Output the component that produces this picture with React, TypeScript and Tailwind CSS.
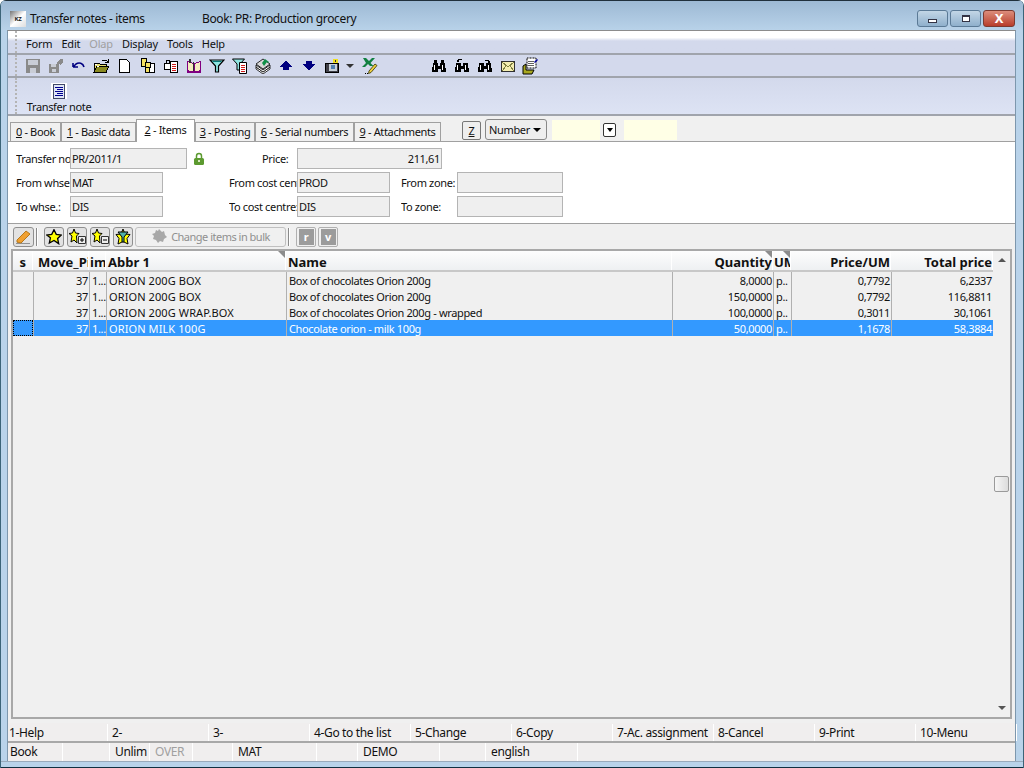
import type { ReactNode } from 'react'

const font = "font-['Noto_Sans','Liberation_Sans',sans-serif]"

function Ico({ children, w = 16, h = 16 }: { children: ReactNode; w?: number; h?: number }) {
  return (
    <svg width={w} height={h} viewBox={`0 0 ${w} ${h}`} shapeRendering="crispEdges">
      {children}
    </svg>
  )
}

const Floppy = ({ arrow }: { arrow?: boolean }) => (
  <Ico>
    {arrow ? (
      <>
        <path d="M1 6h10v9H1z" fill="#8a8a8a" />
        <path d="M3 6h5v3H3zM4 11h4v3H4z" fill="#c9cdd6" />
        <path d="M9 4l3-3h3v3l-3 3-1-1-1 1z" fill="#8a8a8a" />
      </>
    ) : (
      <>
        <path d="M1 1h14v14H1z" fill="#8a8a8a" />
        <path d="M3 2h10v5H3zM5 10h6v5H5z" fill="#c9cdd6" />
      </>
    )}
  </Ico>
)

const Undo = () => (
  <svg width="16" height="16" viewBox="0 0 16 16">
    <path d="M2 9h5M2 9V5M2 9l3-3c3-2 7-1 8 3" fill="none" stroke="#000080" strokeWidth="1.6" />
  </svg>
)

const Folder = () => (
  <Ico w={17}>
    <path d="M1 5h5l1 1h6v8H1z" fill="#e8e070" stroke="#000" />
    <path d="M1 14l3-6h12l-3 6z" fill="#8a8a20" stroke="#000" />
    <path d="M9 2h4l2 2M15 1v3h-3" fill="none" stroke="#000" />
    <path d="M2 6h2v1H2zM4 8h2v1H4z" fill="#fff" />
  </Ico>
)

const Doc = () => (
  <Ico>
    <path d="M2.500 1.500h7l3 3v10h-10z" fill="#fff" stroke="#000" />
  </Ico>
)

const CopyDocs = () => (
  <Ico>
    <path d="M1.500 .5h5v8h-5z" fill="#f4e060" stroke="#000" />
    <path d="M9.500 5.500h5v9h-5z" fill="#fff" stroke="#000" />
    <path d="M5.500 4.500h5v5h-5z" fill="#f4e060" stroke="#000" />
    <path d="M5.500 9.500h4v5h-4z" fill="#f4e060" stroke="#000" />
  </Ico>
)

const LockDoc = () => (
  <Ico>
    <path d="M7.500 3.500h7v11h-7z" fill="#fff" stroke="#000" />
    <path d="M9 6h4v1H9zM9 8h4v1H9zM9 10h4v1H9zM9 12h4v1H9z" fill="#d01818" />
    <path d="M1.500 5.500h6v6h-6z" fill="#fff" stroke="#000" />
    <path d="M3 5V2h3v3" fill="none" stroke="#000" />
  </Ico>
)

const Book = () => (
  <Ico>
    <path d="M1.500 3.500l6 2v9l-6-2z" fill="#f4ecc0" stroke="#800080" />
    <path d="M14.500 3.500l-6 2v9l6-2z" fill="#f4ecc0" stroke="#800080" />
    <path d="M1 13h14v2H1z" fill="#800080" />
    <path d="M3 1h2v4H3zM7 4h1v9H7z" fill="#303030" />
  </Ico>
)

const Funnel = () => (
  <svg width="16" height="16" viewBox="0 0 16 16">
    <path d="M1 2h14l-5.500 6v6h-3V8z" fill="#8fe4e0" stroke="#000" strokeWidth="1.2" />
    <path d="M3 3h10l-1 1H4z" fill="#087878" />
  </svg>
)

const FunnelDoc = () => (
  <svg width="16" height="16" viewBox="0 0 16 16">
    <path d="M.5 1h12L8 6v6H5V6z" fill="#8fe4e0" stroke="#000" />
    <path d="M7.500 4.500h7v11h-7z" fill="#fff" stroke="#000" />
    <path d="M9 7h4v1H9zM9 9h4v1H9zM9 11h4v1H9zM9 13h4v1H9z" fill="#d01818" />
  </svg>
)

const Stack = () => (
  <svg width="16" height="16" viewBox="0 0 16 16">
    <path d="M1 9l7 5 7-5v2l-7 5-7-5z" fill="#fff" stroke="#000" strokeWidth=".8" />
    <path d="M1 7l7 5 7-5v2l-7 5-7-5z" fill="#fff" stroke="#000" strokeWidth=".8" />
    <path d="M1 6l7-5 7 5-7 5z" fill="#d8d8d8" stroke="#000" strokeWidth=".8" />
    <path d="M7 5l3-4 4 3-1 1-1-1-3 4z" fill="#109048" />
  </svg>
)

const Up = () => (
  <Ico>
    <path d="M7 3h2v1h1v1h1v1h1v1h1v1h1v1h-3v3H5V9H2V8h1V7h1V6h1V5h1V4h1z" fill="#000080" />
  </Ico>
)

const Down = () => (
  <Ico>
    <path d="M5 3h6v3h3v1h-1v1h-1v1h-1v1h-1v1H9v1H7v-1H6v-1H5V9H4V8H3V7H2V6h3z" fill="#000080" />
  </Ico>
)

const Camera = () => (
  <Ico>
    <path d="M1 5h13v9H1z" fill="#404048" stroke="#000" />
    <path d="M5 6h8v7H5z" fill="#c8d0d8" />
    <path d="M7 7h4v4H7z" fill="#5080b0" />
    <path d="M9 1h5v4H9z" fill="#f0e020" />
    <path d="M11 2h1v2h-1z" fill="#303030" />
  </Ico>
)

const Excel = () => (
  <svg width="17" height="18" viewBox="0 0 17 18">
    <path d="M1 1h3l3 3 3-3h3L8.500 6l3 3H8L6 7 3 10H0l4-4z" fill="#108040" />
    <path d="M7 14l6-7 2 1.500-6 7-2.500 1z" fill="#f0d040" stroke="#303000" strokeWidth=".8" />
    <path d="M3 16h1v1H3zM5 16h1v1H5z" fill="#000" />
  </svg>
)

const Binoculars = ({ top }: { top?: 'l' | 'r' }) => (
  <Ico>
    {top === undefined && <path d="M3 2h3v3H3zM10 2h3v3h-3z" fill="#000" />}
    {top === 'l' && <path d="M3 4V2l2-1h3v1H5v2z" fill="#000" />}
    {top === 'r' && <path d="M8 2h3l2 1v2h-2V3H8z" fill="#000" />}
    <path d="M2 5h5v3h2V5h5l1 9h-5v-3H7v3H1z" fill="#000" />
    <path d="M3 7h1v5H3zM11 7h1v5h-1z" fill="#fff" />
  </Ico>
)

const Mail = () => (
  <Ico>
    <path d="M1.500 3.500h13v10h-13z" fill="#f4eeb0" stroke="#303030" />
    <path d="M2 4l6 5 6-5M2 13l4-5M14 13l-4-5" fill="none" stroke="#808040" />
  </Ico>
)

const Notepad = () => (
  <svg width="17" height="18" viewBox="0 0 17 18">
    <path d="M5 1h9v10H5z" fill="#fff" stroke="#000" strokeDasharray="1 .5" />
    <path d="M6 4h6v1H6zM6 6h6v1H6zM6 8h6v1H6z" fill="#606060" />
    <path d="M1 9l3-2v6h8l-2 4H1z" fill="#a8a820" stroke="#000" />
    <path d="M12 5l3-3 1 1-3 3z" fill="#0000a0" />
  </svg>
)

const Star = ({ size = 12 }: { size?: number }) => (
  <svg width={size} height={size} viewBox="0 0 12 12">
    <path d="M6 .5l1.700 3.500 3.800.5-2.800 2.600.8 3.900L6 8.600 2.500 10.500l.8-3.900L.5 4.500l3.800-.5z" fill="#ffff00" stroke="#000" strokeWidth="1" />
  </svg>
)

function SmallBtn({ children, w = 'w-[20px]' }: { children: ReactNode; w?: string }) {
  return (
    <div className={`flex h-[20px] items-center justify-center rounded-[3px] border border-[#8f8f8f] bg-[#e2e2e2] ${w}`}>
      {children}
    </div>
  )
}

const Sep = () => <div className="ml-[2px] mr-[6px] h-[18px] w-[2px] border-l border-[#8a8a8a] bg-white" />

function Field({ w, value, right }: { w: string; value?: string; right?: boolean }) {
  return (
    <div className={`flex h-[21px] shrink-0 items-center border border-[#b4b4b4] bg-[#efefef] px-[1px] ${w} ${right ? 'justify-end' : ''}`}>
      {value}
    </div>
  )
}

function Label({ w, text }: { w: string; text: string }) {
  return <div className={`shrink-0 overflow-hidden whitespace-nowrap ${w}`}>{text}</div>
}

const rows = [
  ['37', '1...', 'ORION 200G BOX', 'Box of chocolates Orion 200g', '8,0000', 'p..', '0,7792', '6,2337'],
  ['37', '1...', 'ORION 200G BOX', 'Box of chocolates Orion 200g', '150,0000', 'p..', '0,7792', '116,8811'],
  ['37', '1...', 'ORION 200G WRAP.BOX', 'Box of chocolates Orion 200g - wrapped', '100,0000', 'p..', '0,3011', '30,1061'],
  ['37', '1...', 'ORION MILK 100G', 'Chocolate orion - milk 100g', '50,0000', 'p..', '1,1678', '58,3884'],
]

const columns = [
  { w: 'w-[56px]', right: true },
  { w: 'w-[17px]' },
  { w: 'w-[180px] tracking-[0.1px]' },
  { w: 'w-[386px]' },
  { w: 'w-[101px]', right: true },
  { w: 'w-[18px]' },
  { w: 'w-[100px]', right: true },
  { w: 'w-[102px]', right: true },
]

function Head({ w, text, right, mark, pad = 'pl-[1px]' }: { w: string; text: string; right?: boolean; mark?: boolean; pad?: string }) {
  return (
    <div className={`relative flex h-full shrink-0 items-center overflow-hidden whitespace-nowrap border-r border-white pt-[3px] text-[13px] font-bold tracking-normal ${w} ${right ? 'justify-end' : pad}`}>
      {text}
      {mark && (
        <div className="absolute right-0 top-0 h-0 w-0 border-l-[7px] border-t-[7px] border-l-transparent border-t-[#8c8c8c]" />
      )}
    </div>
  )
}

const tabs = [
  { key: '0', rest: ' - Book', w: 'w-[51px]' },
  { key: '1', rest: ' - Basic data', w: 'w-[75px]' },
  { key: '2', rest: ' - Items', w: 'w-[59px]', on: true },
  { key: '3', rest: ' - Posting', w: 'w-[60px]' },
  { key: '6', rest: ' - Serial numbers', w: 'w-[99px]' },
  { key: '9', rest: ' - Attachments', w: 'w-[87px]' },
]

const fkeys = ['1-Help', '2-', '3-', '4-Go to the list', '5-Change', '6-Copy', '7-Ac. assignment', '8-Cancel', '9-Print', '10-Menu']

const statusCells = [
  { t: 'Book', w: 'w-[55px]', first: true },
  { t: '', w: 'w-[47px]' },
  { t: 'Unlim', w: 'w-[40px]' },
  { t: 'OVER', w: 'w-[43px]', dim: true },
  { t: '', w: 'w-[40px]' },
  { t: 'MAT', w: 'w-[84px]' },
  { t: '', w: 'w-[41px]' },
  { t: 'DEMO', w: 'w-[82px]' },
  { t: '', w: 'w-[46px]' },
  { t: 'english', w: 'w-[92px]' },
]

const Grip = () => <div className="ml-[2px] mr-[3px] h-full w-[3px] border-l-2 border-dotted border-[#b4b4b4]" />

export default function App() {
  const cell = 'flex w-[23px] shrink-0 justify-center'
  return (
    <div className={`flex h-[768px] w-[1024px] flex-col overflow-hidden rounded-t-[6px] border-x border-[#3c6478] bg-[#b9d3ea] text-[11px] leading-none tracking-[-0.35px] text-[#111] ${font}`}>
      {/* Title bar */}
      <div className="flex h-[30px] shrink-0 items-center justify-between border-t border-[#20303c] bg-gradient-to-b from-[#9db9d4] to-[#b8d2e9] pl-[9px] pr-[8px] pt-[6px] text-[12px]">
        <div className="flex items-center">
          <div className="flex h-[16px] w-[16px] items-center justify-center bg-gradient-to-br from-[#777] via-white to-[#ddd] text-[6px] font-bold text-[#222]">KZ</div>
          <span className="ml-[4px] w-[172px]">Transfer notes - items</span>
          <span>Book: PR: Production grocery</span>
        </div>
        <div className="flex items-center gap-[2px]">
          <div className="flex h-[17px] w-[31px] items-center justify-center rounded-[3px] border border-[#5b7a96] bg-gradient-to-b from-[#c3d6e6] to-[#8fb0cc]">
            <div className="mt-[4px] h-[4px] w-[9px] border border-[#334] bg-white" />
          </div>
          <div className="flex h-[17px] w-[31px] items-center justify-center rounded-[3px] border border-[#5b7a96] bg-gradient-to-b from-[#c3d6e6] to-[#8fb0cc]">
            <div className="h-[7px] w-[8px] border border-t-2 border-[#334] bg-white" />
          </div>
          <div className="flex h-[17px] w-[32px] items-center justify-center rounded-[3px] border border-[#7c3a30] bg-gradient-to-b from-[#dc8d7c] to-[#b83c2a] text-[13px] font-bold text-white">
            X
          </div>
        </div>
      </div>

      {/* Client area */}
      <div className="ml-[6px] mr-[7px] flex min-h-0 flex-1 flex-col border-x border-t border-x-[#7d97ad] border-t-[#8c8c8c] bg-[#f0f0f0]">
        <div className="flex h-[24px] shrink-0 items-center border-b-2 border-[#a0a4ac] bg-gradient-to-b from-white from-[30%] to-[#d3d9ec] to-[45%] pl-[5px]">
          <Grip />
          <div className="mt-[3px] flex gap-[9px] pl-[5px] tracking-[-0.2px]">
            <span>Form</span>
            <span>Edit</span>
            <span className="text-[#a0a0a0]">Olap</span>
            <span>Display</span>
            <span>Tools</span>
            <span>Help</span>
          </div>
        </div>

        <div className="flex h-[23px] shrink-0 items-center border-b-2 border-[#a0a4ac] bg-[#d3d9ec] pl-[5px]">
          <Grip />
          <div className="flex items-center">
            <div className={cell}><Floppy /></div>
            <div className={cell}><Floppy arrow /></div>
            <div className={cell}><Undo /></div>
            <div className={cell}><Folder /></div>
            <div className={cell}><Doc /></div>
            <div className={cell}><CopyDocs /></div>
            <div className={cell}><LockDoc /></div>
            <div className={cell}><Book /></div>
            <div className={cell}><Funnel /></div>
            <div className={cell}><FunnelDoc /></div>
            <div className={cell}><Stack /></div>
            <div className={cell}><Up /></div>
            <div className={cell}><Down /></div>
            <div className={cell}><Camera /></div>
            <div className="ml-[3px] h-0 w-0 border-x-[4px] border-t-[4px] border-x-transparent border-t-[#333]" />
            <div className={`${cell} ml-[5px]`}><Excel /></div>
            <div className="w-[45px]" />
            <div className={cell}><Binoculars /></div>
            <div className={cell}><Binoculars top="l" /></div>
            <div className={cell}><Binoculars top="r" /></div>
            <div className={cell}><Mail /></div>
            <div className={cell}><Notepad /></div>
          </div>
        </div>

        <div className="flex h-[38px] shrink-0 border-b-2 border-[#a0a4ac] bg-gradient-to-b from-[#d3d9ec] to-[#dde3f4] pl-[5px]">
          <Grip />
          <div className="flex w-[76px] flex-col items-center pt-[5px]">
            <div className="flex h-[16px] w-[16px] items-center justify-center bg-white">
              <svg width="14" height="15" viewBox="0 0 14 15" shapeRendering="crispEdges">
                <path d="M1.500 .5h11v14h-11z" fill="#dfe6f6" stroke="#404868" />
                <path d="M3 3h8v1H3zM5 5h6v1H5zM3 7h8v1H3zM5 9h6v1H5zM3 11h8v1H3z" fill="#000090" />
              </svg>
            </div>
            <span className="mt-[2px] whitespace-nowrap">Transfer note</span>
          </div>
        </div>

        {/* Tabs */}
        <div className="flex h-[25px] shrink-0 items-end pl-[2px]">
          {tabs.map((t) =>
            <div
              key={t.key}
              className={`flex shrink-0 items-center justify-center whitespace-nowrap border border-b-0 border-[#a0a0a0] pb-[1px] ${t.w} ${t.on ? 'relative -mb-px h-[23px] bg-white pb-[3px]' : 'h-[19px] bg-[#f0f0f0]'}`}
            >
              <span className="underline">{t.key}</span>
              <span className="whitespace-pre">{t.rest}</span>
            </div>
          )}
          <div className="ml-[21px] mb-[1px] flex h-[19px] w-[19px] items-center justify-center rounded-[2px] border border-[#777] bg-[#eee] underline">Z</div>
          <div className="ml-[4px] mb-[1px] flex h-[21px] w-[62px] items-center justify-between rounded-[3px] border border-[#888] bg-[#eee] pl-[3px] pr-[5px]">
            Number
            <div className="h-0 w-0 border-x-[4px] border-t-[4px] border-x-transparent border-t-black" />
          </div>
          <div className="ml-[5px] mb-[1px] h-[20px] w-[48px] bg-[#ffffe6]" />
          <div className="mb-[1px] flex h-[20px] w-[19px] items-center justify-center bg-[#efefef]">
            <div className="flex h-[14px] w-[13px] items-center justify-center rounded-[2px] border border-[#333] bg-white">
              <div className="h-0 w-0 border-x-[3px] border-t-[4px] border-x-transparent border-t-black" />
            </div>
          </div>
          <div className="ml-[5px] mb-[1px] h-[20px] w-[53px] bg-[#ffffe6]" />
        </div>

        {/* Form */}
        <div className="flex h-[83px] shrink-0 flex-col gap-[3px] border-y border-[#a0a0a0] bg-white pl-[8px] pt-[6px]">
          <div className="flex items-center">
            <Label w="w-[54px]" text="Transfer note" />
            <Field w="w-[117px]" value="PR/2011/1" />
            <div className="ml-[6px] flex w-[69px] items-center">
              <svg width="12" height="13" viewBox="0 0 12 13">
                <path d="M3.500 6V4a2.500 2.500 0 0 1 5 0v2" fill="none" stroke="#5c9a30" strokeWidth="1.500" />
                <rect x="1" y="6" width="10" height="7" rx="1.500" fill="#5c9a30" />
                <rect x="5" y="8" width="2" height="2" fill="#d8e8c0" />
              </svg>
            </div>
            <Label w="w-[35px]" text="Price:" />
            <Field w="w-[145px]" value="211,61" right />
          </div>
          <div className="flex items-center">
            <Label w="w-[54px]" text="From whse.:" />
            <Field w="w-[93px]" value="MAT" />
            <div className="w-[66px]" />
            <Label w="w-[68px]" text="From cost centre" />
            <Field w="w-[93px]" value="PROD" />
            <div className="w-[11px]" />
            <Label w="w-[56px]" text="From zone:" />
            <Field w="w-[106px]" />
          </div>
          <div className="flex items-center">
            <Label w="w-[54px]" text="To whse.:" />
            <Field w="w-[93px]" value="DIS" />
            <div className="w-[66px]" />
            <Label w="w-[68px]" text="To cost centre:" />
            <Field w="w-[93px]" value="DIS" />
            <div className="w-[11px]" />
            <Label w="w-[56px]" text="To zone:" />
            <Field w="w-[106px]" />
          </div>
        </div>

        {/* Item action bar */}
        <div className="flex h-[25px] shrink-0 items-center bg-[#f0f0f0] pl-[5px]">
          <SmallBtn w="w-[21px]">
            <svg width="17" height="16" viewBox="0 0 17 16">
              <path d="M1 14.500h14M2 14l3-4M7 14l-2-3" stroke="#909090" fill="none" />
              <path d="M2 11l9-9 4 3-9 9-4-1z" fill="#f0a030" stroke="#b87818" />
            </svg>
          </SmallBtn>
          <Sep />
          <div className="flex gap-[3px]">
            <SmallBtn><Star size={16} /></SmallBtn>
            <SmallBtn>
              <svg width="17" height="16" viewBox="0 0 17 16">
                <path d="M5 0l1.500 4 3.500.5-2.500 2.500L8 14 5 11l-3 2 1-6L0 4.500 3.500 4z" fill="#ffff00" stroke="#000" />
                <path d="M9.500 7.500h7v7h-7z" fill="#eee" stroke="#333" />
                <path d="M11 11h4M13 9v4" stroke="#000" />
              </svg>
            </SmallBtn>
            <SmallBtn>
              <svg width="17" height="16" viewBox="0 0 17 16">
                <path d="M5 0l1.500 4 3.500.5-2.500 2.500L8 14 5 11l-3 2 1-6L0 4.500 3.500 4z" fill="#ffff00" stroke="#000" />
                <path d="M9.500 7.500h7v7h-7z" fill="#eee" stroke="#333" />
                <path d="M11 11h4" stroke="#000" />
              </svg>
            </SmallBtn>
            <SmallBtn>
              <svg width="16" height="16" viewBox="0 0 16 16">
                <path d="M8 0l2 5 5 .5-3 4 1 5.500-5-2.500L3 15l1-5.500-3-4L6 5z" fill="#ffff00" stroke="#000" />
                <path d="M3 3h10L9 8v5H7V8z" fill="#50b0a8" stroke="#000" />
              </svg>
            </SmallBtn>
          </div>
          <div className="ml-[2px] flex h-[20px] w-[151px] items-center justify-center gap-[4px] rounded-[3px] border border-[#c0c0c0] bg-[#f0f0f0] tracking-[-0.5px] text-[#8f8f8f]">
            <svg width="16" height="15" viewBox="0 0 16 15">
              <path d="M8 0l3 3 2-1 1 4 2 2-3 2-1 3-3-1-2 2-2-3-3-1 1-3-2-2 3-1 1-3 2 1z" fill="#a8a8a8" />
            </svg>
            Change items in bulk
          </div>
          <Sep />
          <div className="flex gap-[2px]">
            <div className="flex h-[20px] w-[20px] items-center justify-center rounded-[2px] border border-[#b0b0b0]">
              <div className="flex h-[16px] w-[15px] items-center justify-center bg-[#9c9c9c] text-[11px] font-bold text-white">r</div>
            </div>
            <div className="flex h-[20px] w-[20px] items-center justify-center rounded-[2px] border border-[#b0b0b0]">
              <div className="flex h-[16px] w-[15px] items-center justify-center bg-[#9c9c9c] text-[11px] font-bold text-white">v</div>
            </div>
          </div>
        </div>

        {/* Grid */}
        <div className="mx-[3px] flex min-h-0 flex-1 border-[2px] border-double border-[#a8a8a8] bg-[#f0f0f0]">
          <div className="flex min-w-0 flex-1 flex-col">
            <div className="flex h-[21px] shrink-0 items-center border-b-2 border-[#c8c8c8] bg-gradient-to-b from-[#fdfdfd] to-[#eef0f2]">
              <div className="flex h-full w-[20px] shrink-0 items-center justify-center border-r border-white pt-[3px] text-[13px] font-bold">s</div>
              <Head w="w-[56px]" text="Move_Pi" pad="pl-[5px]" />
              <Head w="w-[17px]" text="im" />
              <Head w="w-[180px]" text="Abbr 1" pad="pl-[2px]" mark />
              <Head w="w-[386px]" text="Name" pad="pl-[2px]" />
              <Head w="w-[101px]" text="Quantity" right mark />
              <Head w="w-[18px]" text="UM" mark />
              <Head w="w-[100px]" text="Price/UM" right />
              <Head w="w-[102px]" text="Total price" right />
            </div>
            {rows.map((r, i) => {
              const sel = i === 3
              return (
                <div key={i} className={`flex h-[16px] w-[980px] shrink-0 ${sel ? 'bg-[#3399ff] text-white' : ''}`}>
                  <div className={`w-[20px] shrink-0 ${sel ? 'border border-dotted border-black' : ''}`} />
                  {r.map((c, j) => (
                    <div
                      key={j}
                      className={`flex shrink-0 items-center overflow-hidden whitespace-nowrap border-l border-[#b0b0b0] pl-[2px] pr-[1px] ${columns[j].w} ${columns[j].right ? 'justify-end' : ''}`}
                    >
                      {c}
                    </div>
                  ))}
                </div>
              )
            })}
          </div>
          {/* Scrollbar */}
          <div className="flex w-[17px] shrink-0 flex-col items-center justify-between bg-[#f0f0f0] py-[7px]">
            <div className="h-0 w-0 border-x-[4px] border-b-[4px] border-x-transparent border-b-[#555]" />
            <div className="h-[16px] w-[15px] rounded-[2px] border border-[#9a9a9a] bg-gradient-to-r from-[#f6f6f6] to-[#dcdcdc]" />
            <div className="h-0 w-0 border-x-[4px] border-t-[4px] border-x-transparent border-t-[#555]" />
          </div>
        </div>

        {/* Function keys */}
        <div className="mt-[4px] flex h-[20px] shrink-0 items-center border-b-2 border-[#a8a8a8] bg-[#f0eeee] pt-[1px]">
          {fkeys.map((k, i) => (
            <div
              key={k}
              className={`flex h-full shrink-0 items-center overflow-hidden whitespace-nowrap border-r border-white text-[12px] ${i === 0 ? 'w-[100px] pl-[1px]' : 'w-[101px] pl-[4px]'}`}
            >
              {k}
            </div>
          ))}
        </div>

        {/* Status bar */}
        <div className="flex h-[18px] shrink-0 items-center bg-[#f0eeee] text-[12px]">
          {statusCells.map((c, i) => (
            <div key={i} className={`flex h-full shrink-0 items-center whitespace-nowrap border-r border-white ${c.first ? 'pl-[2px]' : 'pl-[5px]'} ${c.w} ${c.dim ? 'text-[#a0a0a0]' : ''}`}>
              {c.t}
            </div>
          ))}
        </div>
      </div>
      <div className="h-[6px] shrink-0 border-t border-[#9ab] bg-[#b9d3ea]" />
      <div className="h-[1px] shrink-0 bg-[#103040]" />
    </div>
  )
}
